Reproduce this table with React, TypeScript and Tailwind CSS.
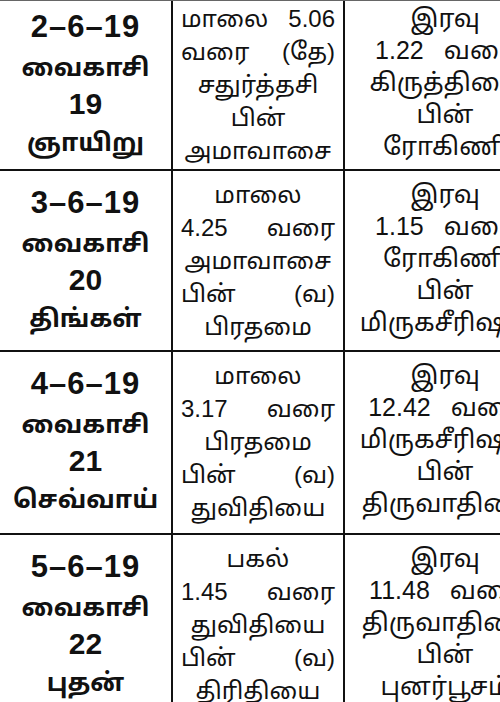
const rows = [
  {
    date: '2–6–19',
    month: 'வைகாசி',
    day: '19',
    weekday: 'ஞாயிறு',
    tithi: [['மாலை', '5.06'], ['வரை', '(தே)'], ['சதுர்த்தசி'], ['பின்'], ['அமாவாசை']],
    star: [['இரவு'], ['1.22', 'வரை'], ['கிருத்திகை'], ['பின்'], ['ரோகிணி']],
  },
  {
    date: '3–6–19',
    month: 'வைகாசி',
    day: '20',
    weekday: 'திங்கள்',
    tithi: [['மாலை'], ['4.25', 'வரை'], ['அமாவாசை'], ['பின்', '(வ)'], ['பிரதமை']],
    star: [['இரவு'], ['1.15', 'வரை'], ['ரோகிணி'], ['பின்'], ['மிருகசீரிஷம்']],
  },
  {
    date: '4–6–19',
    month: 'வைகாசி',
    day: '21',
    weekday: 'செவ்வாய்',
    tithi: [['மாலை'], ['3.17', 'வரை'], ['பிரதமை'], ['பின்', '(வ)'], ['துவிதியை']],
    star: [['இரவு'], ['12.42', 'வரை'], ['மிருகசீரிஷம்'], ['பின்'], ['திருவாதிரை']],
  },
  {
    date: '5–6–19',
    month: 'வைகாசி',
    day: '22',
    weekday: 'புதன்',
    tithi: [['பகல்'], ['1.45', 'வரை'], ['துவிதியை'], ['பின்', '(வ)'], ['திரிதியை']],
    star: [['இரவு'], ['11.48', 'வரை'], ['திருவாதிரை'], ['பின்'], ['புனர்பூசம்']],
  },
];

const font = { fontFamily: '"Liberation Sans", "Noto Sans Tamil", "Lohit Tamil", sans-serif' };

function Lines({ lines, wide }: { lines: string[][]; wide?: boolean }) {
  return (
    <div className={wide ? 'flex flex-col items-center' : 'flex flex-col items-stretch'}>
      {lines.map((words, i) => (
        <div
          key={i}
          className={
            words.length > 1
              ? wide
                ? 'flex justify-center gap-[20px] leading-[32px] whitespace-nowrap'
                : 'flex justify-between px-[8px] leading-[33px] whitespace-nowrap'
              : wide
                ? 'text-center leading-[32px] whitespace-nowrap'
                : 'text-center leading-[33px] whitespace-nowrap'
          }
        >
          {words.map((w, j) => (
            <span key={j}>{w}</span>
          ))}
        </div>
      ))}
    </div>
  );
}

export default function App() {
  return (
    <div className="w-[500px] h-[702px] overflow-hidden bg-white text-[#111]" style={font}>
      <div className="w-[560px] border-t border-[#666]">
        {rows.map((r, i) => {
          const first = i === 0;
          return (
            <div
              key={i}
              className={`grid grid-cols-[171px_2px_170px_2px_215px] border-b-2 border-[#111] ${
                first ? 'h-[170px]' : i === 1 ? 'h-[181px]' : 'h-[183px]'
              }`}
            >
              <div
                className={`flex flex-col items-center font-bold text-[25px] ${
                  first ? 'pt-[6px]' : 'pt-[12px]'
                }`}
              >
                <div className="text-[31px] tracking-[1px] leading-[40px]">{r.date}</div>
                <div className="leading-[40px]">{r.month}</div>
                <div className="text-[30px] leading-[34px]">{r.day}</div>
                <div className="leading-[42px]">{r.weekday}</div>
              </div>
              <div className="bg-[#111]" />
              <div className={`text-[24px] ${first ? 'pt-[1px]' : 'pt-[7px]'}`}>
                <Lines lines={r.tithi} />
              </div>
              <div className="bg-[#111]" />
              <div className={`w-[200px] text-[25px] ${first ? 'pt-[1px]' : 'pt-[7px]'}`}>
                <Lines lines={r.star} wide />
              </div>
            </div>
          );
        })}
      </div>
    </div>
  );
}
